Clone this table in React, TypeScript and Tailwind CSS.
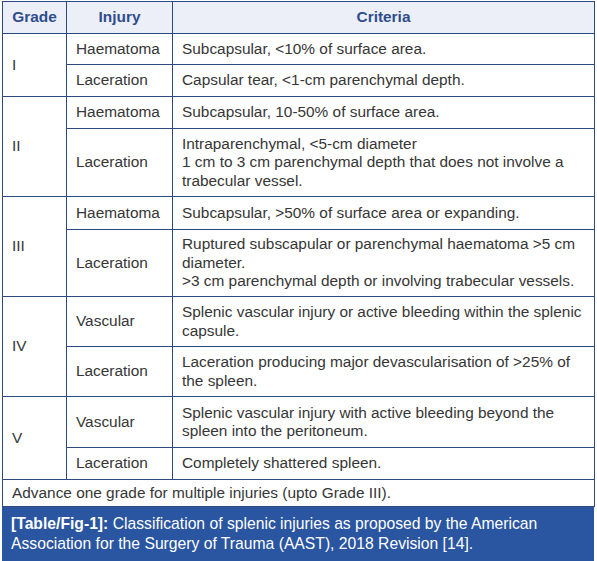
import React from "react";

type Row = { injury: string; criteria: string[]; h: number };
type Group = { grade: string; rows: Row[] };

const groups: Group[] = [
  {
    grade: "I",
    rows: [
      { injury: "Haematoma", criteria: ["Subcapsular, <10% of surface area."], h: 31 },
      { injury: "Laceration", criteria: ["Capsular tear, <1-cm parenchymal depth."], h: 32 },
    ],
  },
  {
    grade: "II",
    rows: [
      { injury: "Haematoma", criteria: ["Subcapsular, 10-50% of surface area."], h: 32 },
      {
        injury: "Laceration",
        criteria: [
          "Intraparenchymal, <5-cm diameter",
          "1 cm to 3 cm parenchymal depth that does not involve a trabecular vessel.",
        ],
        h: 68,
      },
    ],
  },
  {
    grade: "III",
    rows: [
      { injury: "Haematoma", criteria: ["Subcapsular, >50% of surface area or expanding."], h: 33 },
      {
        injury: "Laceration",
        criteria: [
          "Ruptured subscapular or parenchymal haematoma >5 cm diameter.",
          ">3 cm parenchymal depth or involving trabecular vessels.",
        ],
        h: 67,
      },
    ],
  },
  {
    grade: "IV",
    rows: [
      {
        injury: "Vascular",
        criteria: ["Splenic vascular injury or active bleeding within the splenic capsule."],
        h: 50,
      },
      {
        injury: "Laceration",
        criteria: ["Laceration producing major devascularisation of >25% of the spleen."],
        h: 50,
      },
    ],
  },
  {
    grade: "V",
    rows: [
      {
        injury: "Vascular",
        criteria: ["Splenic vascular injury with active bleeding beyond the spleen into the peritoneum."],
        h: 51,
      },
      { injury: "Laceration", criteria: ["Completely shattered spleen."], h: 32 },
    ],
  },
];

const bd = "border border-[#2c4a80]";

export default function App() {
  return (
    <div
      className="w-[597px] h-[561px] bg-white pt-[1px] pl-[2px]"
      style={{ fontFamily: '"Liberation Sans", Arial, sans-serif' }}
    >
      <table className="border-collapse w-[593px] table-fixed text-[#363636] text-[15.4px] leading-[18.5px]">
        <colgroup>
          <col className="w-[64px]" />
          <col className="w-[106px]" />
          <col />
        </colgroup>
        <thead>
          <tr className="h-[32px] bg-[#eceff8] text-[#2f4d8c] font-bold text-[15.4px]">
            <th className={`${bd} text-center`}>Grade</th>
            <th className={`${bd} text-center`}>Injury</th>
            <th className={`${bd} text-center`}>Criteria</th>
          </tr>
        </thead>
        <tbody>
          {groups.map((g) =>
            g.rows.map((r, i) => (
              <tr key={g.grade + i} style={{ height: r.h }}>
                {i === 0 && (
                  <td rowSpan={g.rows.length} className={`${bd} align-middle pl-[9px]`}>
                    {g.grade}
                  </td>
                )}
                <td className={`${bd} align-middle pl-[9px]`}>{r.injury}</td>
                <td className={`${bd} align-middle pl-[9px] pr-[10px] py-[3px]`}>
                  {r.criteria.map((c, k) => (
                    <div key={k}>{c}</div>
                  ))}
                </td>
              </tr>
            ))
          )}
          <tr className="h-[27px]">
            <td colSpan={3} className={`${bd} align-middle pl-[9px]`}>
              Advance one grade for multiple injuries (upto Grade III).
            </td>
          </tr>
        </tbody>
      </table>
      <div className="w-[592px] bg-[#2a55a0] text-white text-[15.7px] leading-[20px] pl-[9px] pr-[10px] pt-[7px] pb-[7px]">
        <span className="font-bold">[Table/Fig-1]:</span>{" "}
        <span>Classification of splenic injuries as proposed by the American Association for the Surgery of Trauma (AAST), 2018 Revision [14].</span>
      </div>
    </div>
  );
}
